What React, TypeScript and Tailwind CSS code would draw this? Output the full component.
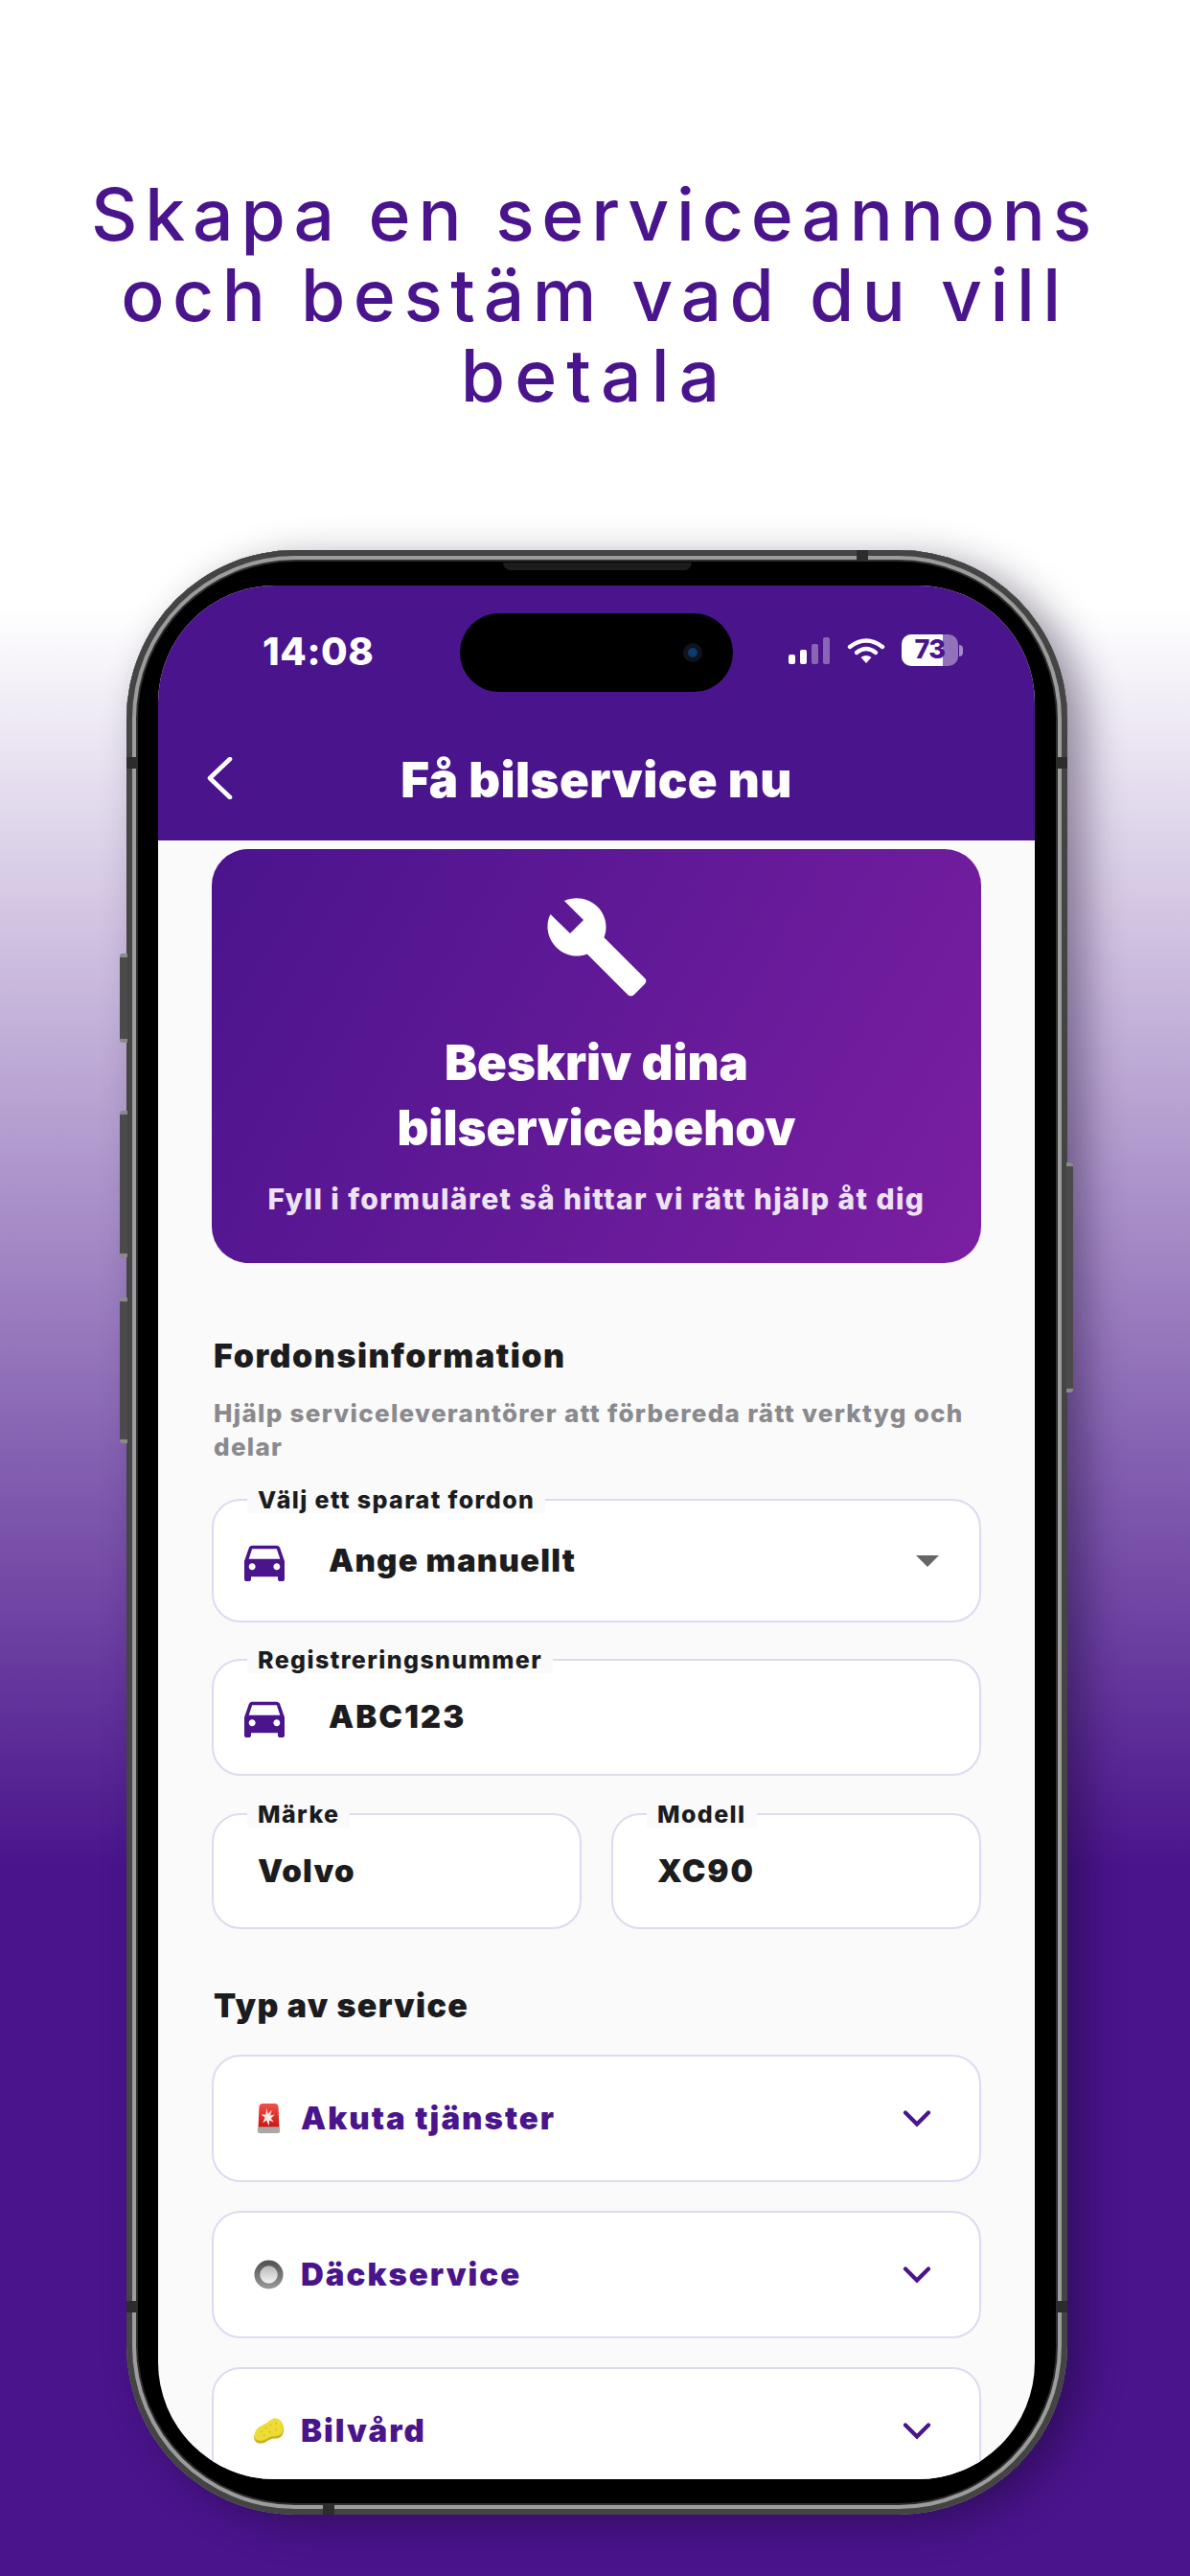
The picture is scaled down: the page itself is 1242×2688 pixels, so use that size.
import React from "react";

const INTER = { fontFamily: "Inter, 'Liberation Sans', sans-serif" };

function Car() {
  return (
    <svg viewBox="0 0 24 24" className="w-[56px] h-[56px] shrink-0" fill="#4a148c">
      <path d="M18.92 6.01C18.72 5.42 18.16 5 17.5 5h-11c-.66 0-1.21.42-1.42 1.01L3 12v8c0 .55.45 1 1 1h1c.55 0 1-.45 1-1v-1h12v1c0 .55.45 1 1 1h1c.55 0 1-.45 1-1v-8l-2.08-5.99zM6.5 16c-.83 0-1.5-.67-1.5-1.5S5.67 13 6.5 13s1.5.67 1.5 1.5S7.33 16 6.5 16zm11 0c-.83 0-1.5-.67-1.5-1.5s.67-1.5 1.5-1.5 1.5.67 1.5 1.5-.67 1.5-1.5 1.5zM5 11l1.5-4.5h11L19 11H5z" />
    </svg>
  );
}

function Siren() {
  return (
    <svg viewBox="0 0 32 34" className="w-[25px] h-[33px]" preserveAspectRatio="none">
      <defs>
        <linearGradient id="sr" x1="0" y1="0" x2="0" y2="1">
          <stop offset="0" stopColor="#f2524a" />
          <stop offset="1" stopColor="#c9140f" />
        </linearGradient>
      </defs>
      <path d="M3 6q0-5 5-5h16q5 0 5 5l1 21H2z" fill="url(#sr)" />
      <rect x="1" y="26" width="30" height="7" rx="3" fill="#a8a8a8" />
      <path d="M13 6l2 6 5-4-2 6 6-1-5 4 4 4-6-2-1 6-3-6-5 3 3-6-5-3 6 0z" fill="#ffe9e6" />
    </svg>
  );
}

function Tire() {
  return (
    <svg viewBox="0 0 32 32" className="w-[31px] h-[31px]">
      <defs>
        <linearGradient id="tr" x1="0" y1="0" x2="0" y2="1">
          <stop offset="0" stopColor="#4e4e4e" />
          <stop offset="1" stopColor="#9a9a9a" />
        </linearGradient>
        <linearGradient id="tc" x1="0" y1="0" x2="0" y2="1">
          <stop offset="0" stopColor="#b9b9b9" />
          <stop offset="1" stopColor="#f2f2f2" />
        </linearGradient>
      </defs>
      <circle cx="16" cy="16" r="15.5" fill="url(#tr)" />
      <circle cx="16" cy="16" r="9.5" fill="url(#tc)" />
    </svg>
  );
}

function Sponge() {
  return (
    <svg viewBox="0 0 34 30" className="w-[33px] h-[29px]">
      <path d="M1.5 20c-1.500 6 3 9.500 8.500 8.500 4-.8 6-3.500 9.500-4.500 4-1 9 .5 12-4 3.500-5.500 1.500-16-5.500-18-5-1.300-7 2-10.500 4.500C11 9.500 3.500 12 1.500 20z" fill="#c9b31e" />
      <path d="M1.800 18c-1 5.500 3 8.500 8 7.500 4-.8 6-3.300 9.700-4.300 4-1 8.500.3 11.500-3.700 3.300-5 1.300-14-5.200-15.800-4.800-1.200-6.800 1.800-10.300 4.300-4 2.800-12 4.500-13.700 12z" fill="#eedc36" />
      <g fill="#d6c224">
        <circle cx="9" cy="16" r="1.100" /><circle cx="14" cy="12" r="1.100" /><circle cx="19" cy="9" r="1.100" />
        <circle cx="25" cy="7" r="1.100" /><circle cx="12" cy="20" r="1.100" /><circle cx="18" cy="16" r="1.100" /><circle cx="25" cy="14" r="1.100" />
      </g>
    </svg>
  );
}

function Chevron() {
  return (
    <svg viewBox="0 0 30 18" className="w-[30px] h-[18px]" fill="none" stroke="#4a148c" strokeWidth="4.2" strokeLinecap="round" strokeLinejoin="miter">
      <path d="M3 2.500l12 12 12-12" />
    </svg>
  );
}

function Field({ label, h, children }: { label: string; h: string; children: React.ReactNode }) {
  return (
    <div className={`relative ${h} bg-white rounded-[30px] border-2 border-[#e2d8f0] flex items-center`}>
      <span className="absolute left-[35px] top-[-15px] bg-[#fafafa] px-[11px] text-[25px] leading-[28px] font-extrabold tracking-[1.4px] text-[#1c1c1e]">
        {label}
      </span>
      {children}
    </div>
  );
}

function Accordion({ icon, label }: { icon: React.ReactNode; label: string }) {
  return (
    <div className="h-[133px] shrink-0 bg-white rounded-[30px] border-2 border-[#e2d8f0] flex items-center pl-[39px] pr-[50px]">
      <span className="w-[36px] flex justify-center">{icon}</span>
      <span className="ml-[16px] flex-1 text-[33px] font-black tracking-[2px] text-[#4a148c]">{label}</span>
      <Chevron />
    </div>
  );
}

function StatusBar() {
  return (
    <div className="relative h-[129px] shrink-0">
      <span className="absolute left-[109px] top-[49px] text-[40px] leading-[40px] font-extrabold text-white tracking-[0.6px]">14:08</span>
      <div className="absolute left-[315px] top-[29px] w-[285px] h-[82px] rounded-[41px] bg-black">
        <span className="absolute right-[32px] top-[31px] w-[20px] h-[20px] rounded-full bg-[#0d3a6f] border-[5px] border-[#10131c]" />
      </div>
      <div className="absolute left-[658px] top-[51px] flex items-center gap-[17px]">
        <svg viewBox="0 0 44 28" className="w-[44px] h-[28px]">
          <rect x="0" y="18" width="7" height="10" rx="2" fill="#fff" />
          <rect x="12" y="13" width="7" height="15" rx="2" fill="#fff" />
          <rect x="24" y="7" width="7" height="21" rx="2" fill="#fff" fillOpacity="0.35" />
          <rect x="36" y="0" width="7" height="28" rx="2" fill="#fff" fillOpacity="0.35" />
        </svg>
        <svg viewBox="0 0 40 28" className="w-[40px] h-[28px]" fill="none" stroke="#fff" strokeWidth="4.4" strokeLinecap="round">
          <path d="M3 10Q20-3 37 10" />
          <path d="M10 16q10-8 20 0" />
          <path d="M20 27l-5.500-6q5.500-4 11 0z" fill="#fff" stroke="none" />
        </svg>
        <div className="flex items-center">
          <div className="relative w-[59px] h-[33px] rounded-[10px] bg-white/40 overflow-hidden">
            <div className="absolute left-0 top-0 bottom-0 w-[43px] bg-white" />
            <span className="absolute inset-0 flex items-center justify-center text-[27px] font-extrabold text-[#4a148c] tracking-[-0.5px]">73</span>
          </div>
          <div className="w-[4px] h-[12px] ml-[1px] rounded-r-full bg-white/50" />
        </div>
      </div>
    </div>
  );
}

export default function App() {
  return (
    <div
      className="relative w-[1242px] h-[2688px] overflow-hidden flex flex-col items-center bg-[linear-gradient(180deg,#ffffff_23.5%,#4a148c_72.5%)]"
      style={INTER}
    >
      <h1 className="mt-[182px] w-[1140px] text-center text-[75px] leading-[84px] font-medium tracking-[7.8px] text-[#4a148c]">
        Skapa en serviceannons
        <br />
        <span className="tracking-[8.5px]">och bestäm vad du vill</span>
        <br />
        <span className="tracking-[10px]">betala</span>
      </h1>

      <div className="relative mt-[140px] ml-[4px] w-[982px] h-[2050px] rounded-[176px] bg-[#1c1c1c] p-[12px] shadow-[18px_10px_42px_rgba(20,5,40,0.42),inset_0_0_0_6px_#444444,inset_0_0_0_10px_#9c9c9c,inset_0_0_0_12px_#2e2e2e]">
        {/* side buttons */}
        <div className="absolute left-[-7px] top-[421px] w-[8px] h-[93px] rounded-l-[3px] bg-[#4b4b4b] border-y-4 border-[#8a8a8a]" />
        <div className="absolute left-[-7px] top-[585px] w-[8px] h-[153px] rounded-l-[3px] bg-[#4b4b4b] border-y-4 border-[#8a8a8a]" />
        <div className="absolute left-[-7px] top-[780px] w-[8px] h-[152px] rounded-l-[3px] bg-[#4b4b4b] border-y-4 border-[#8a8a8a]" />
        <div className="absolute right-[-6px] top-[639px] w-[7px] h-[240px] rounded-r-[3px] bg-[#4b4b4b] border-y-4 border-[#8a8a8a]" />
        {/* antenna bands */}
        <div className="absolute left-[762px] top-0 w-[12px] h-[12px] bg-[#2c2c2c]" />
        <div className="absolute left-[205px] bottom-0 w-[12px] h-[12px] bg-[#2c2c2c]" />
        <div className="absolute left-0 top-[216px] w-[12px] h-[12px] bg-[#2c2c2c]" />
        <div className="absolute right-0 top-[216px] w-[12px] h-[12px] bg-[#2c2c2c]" />
        <div className="absolute left-0 bottom-[211px] w-[12px] h-[12px] bg-[#2c2c2c]" />
        <div className="absolute right-0 bottom-[211px] w-[12px] h-[12px] bg-[#2c2c2c]" />
        {/* speaker lip */}
        <div className="absolute z-10 left-[393px] top-[13px] w-[197px] h-[8px] rounded-b-[8px] bg-[#1c1c1c]" />

        <div className="w-full h-full rounded-[164px] bg-black pt-[25px] pb-[25px] pl-[21px] pr-[22px]">
          <div className="w-full h-full rounded-[122px] overflow-hidden bg-[#fafafa] flex flex-col">
            <div className="h-[266px] shrink-0 bg-[#4a148c] flex flex-col">
              <StatusBar />
              <div className="relative flex-1 flex items-start justify-center pt-[44px]">
                <svg viewBox="0 0 28 44" className="absolute left-[50px] top-[50px] w-[28px] h-[44px]" fill="none" stroke="#fff" strokeWidth="4.6" strokeLinecap="round" strokeLinejoin="round">
                  <path d="M25 2L4 22l21 20" />
                </svg>
                <span className="text-[51px] leading-[60px] font-black text-white tracking-[0.4px]">Få bilservice nu</span>
              </div>
            </div>

            <div className="flex-1 min-h-0 px-[56px] pt-[9px] flex flex-col">
              <div className="h-[432px] shrink-0 rounded-[38px] bg-[linear-gradient(120deg,#4a148c,#7b1fa2)] flex flex-col items-center pt-[46px]">
                <svg viewBox="0 0 24 24" className="w-[112px] h-[112px]" fill="#fff">
                  <path d="M22.7 19l-9.1-9.1c.9-2.3.4-5-1.5-6.9-2-2-5-2.4-7.4-1.3L9 6 6 9 1.6 4.7C.4 7.1.9 10.1 2.9 12.1c1.9 1.9 4.6 2.4 6.9 1.5l9.1 9.1c.4.4 1 .4 1.4 0l2.3-2.3c.5-.4.5-1.1.1-1.4z" />
                </svg>
                <div className="mt-[31px] text-center text-[51px] leading-[68px] font-black text-white">
                  Beskriv dina
                  <br />
                  bilservicebehov
                </div>
                <div className="mt-[22px] text-[30px] leading-[36px] font-extrabold tracking-[1.4px] text-[#ede3f4]">
                  Fyll i formuläret så hittar vi rätt hjälp åt dig
                </div>
              </div>

              <h2 className="mt-[77px] ml-[2px] text-[34px] leading-[40px] font-black tracking-[1.5px] text-[#1c1c1e]">Fordonsinformation</h2>
              <p className="mt-[22px] ml-[2px] text-[26px] leading-[35px] font-extrabold tracking-[1.3px] text-[#8a8a8e]">
                Hjälp serviceleverantörer att förbereda rätt verktyg och delar
              </p>

              <div className="mt-[37px] flex flex-col">
                <Field label="Välj ett sparat fordon" h="h-[129px]">
                  <div className="ml-[25px]"><Car /></div>
                  <span className="ml-[39px] flex-1 text-[33px] font-black tracking-[1.2px] text-[#1c1c1e]">Ange manuellt</span>
                  <svg viewBox="0 0 24 12" className="w-[24px] h-[12px] mr-[42px]" fill="#666666"><path d="M0 0h24L12 12z" /></svg>
                </Field>
                <div className="mt-[38px]">
                  <Field label="Registreringsnummer" h="h-[122px]">
                    <div className="ml-[25px]"><Car /></div>
                    <span className="ml-[39px] text-[33px] font-black tracking-[2px] text-[#1c1c1e]">ABC123</span>
                  </Field>
                </div>
                <div className="mt-[39px] grid grid-cols-2 gap-[31px]">
                  <Field label="Märke" h="h-[121px]">
                    <span className="ml-[46px] text-[33px] font-black tracking-[1.2px] text-[#1c1c1e]">Volvo</span>
                  </Field>
                  <Field label="Modell" h="h-[121px]">
                    <span className="ml-[46px] text-[33px] font-black tracking-[2px] text-[#1c1c1e]">XC90</span>
                  </Field>
                </div>
              </div>

              <h2 className="mt-[60px] ml-[2px] text-[34px] leading-[40px] font-black tracking-[1.3px] text-[#1c1c1e]">Typ av service</h2>

              <div className="mt-[31px] flex flex-col gap-[30px]">
                <Accordion icon={<Siren />} label="Akuta tjänster" />
                <Accordion icon={<Tire />} label="Däckservice" />
                <Accordion icon={<Sponge />} label="Bilvård" />
              </div>
            </div>
          </div>
        </div>
      </div>
    </div>
  );
}
